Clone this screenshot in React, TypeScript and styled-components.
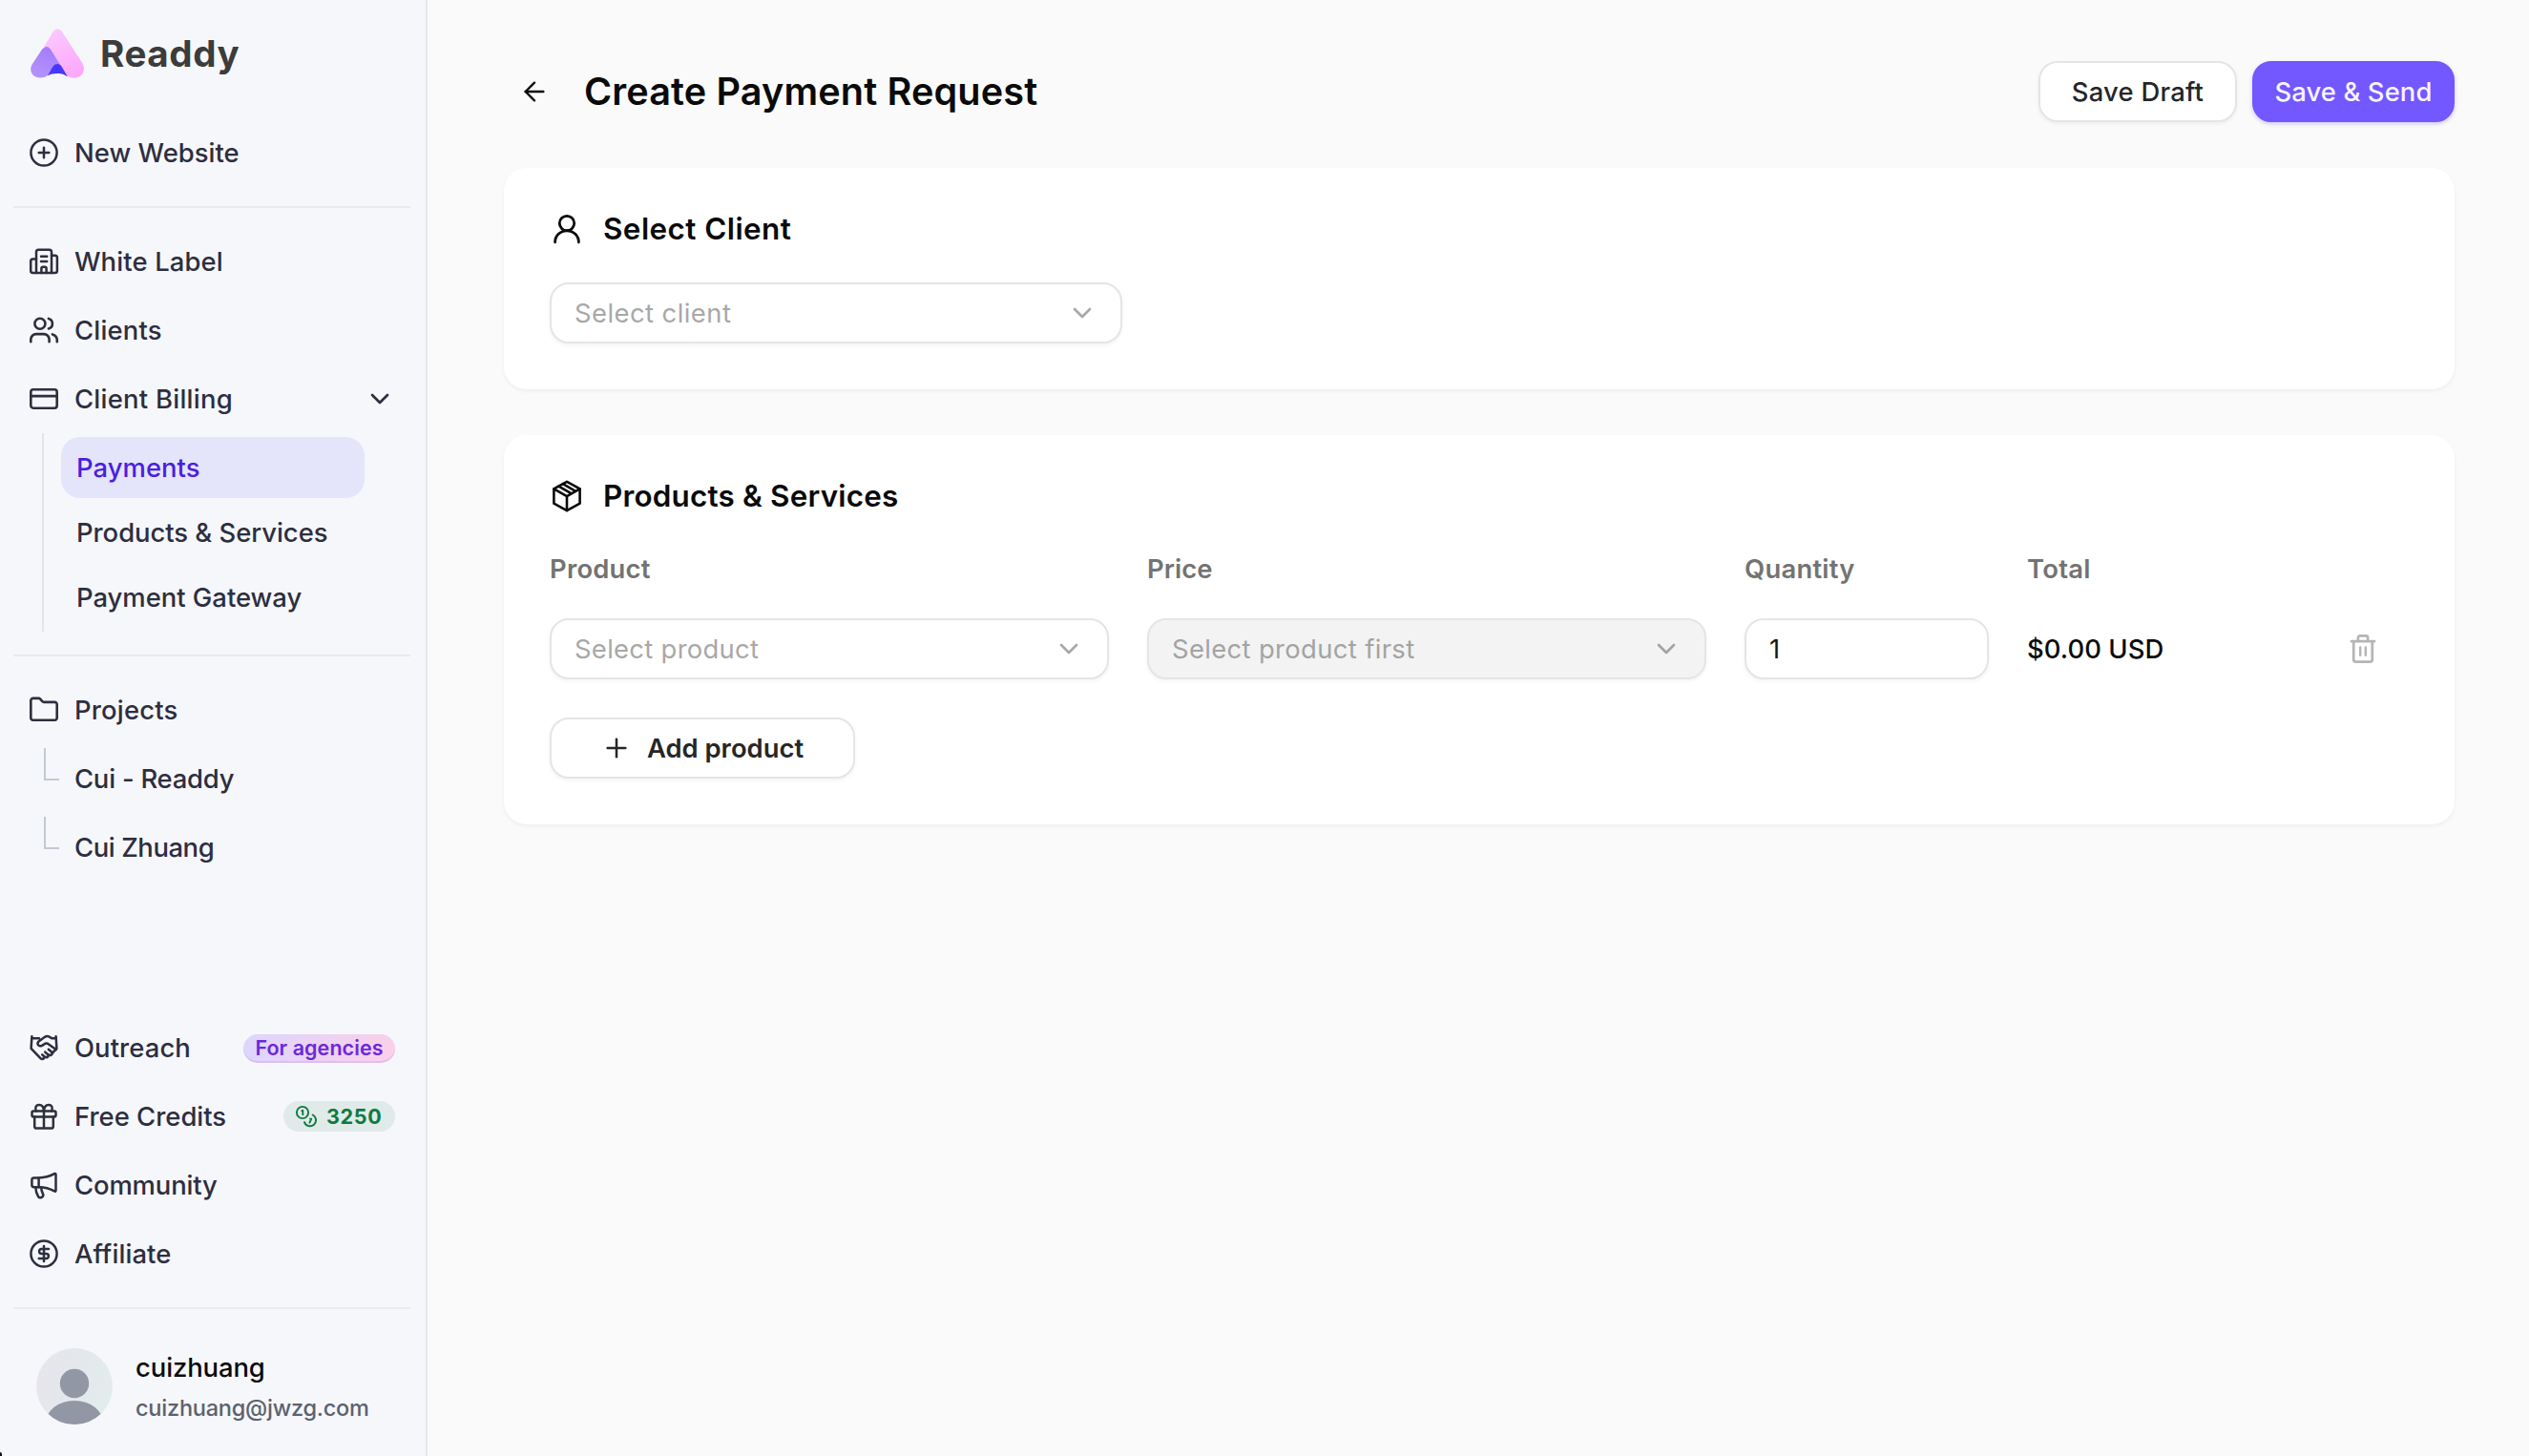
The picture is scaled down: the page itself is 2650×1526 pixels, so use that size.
import React from "react";
import styled, { createGlobalStyle, css } from "styled-components";
import { ArrowLeft, ChevronDown, Plus } from "lucide-react";

const GlobalStyle = createGlobalStyle`
  *, *::before, *::after { box-sizing: border-box; }
  body {
    margin: 0;
    background: #fafafa;
    font-family: Inter, "Noto Sans", sans-serif;
    font-size: 27.4px;
    -webkit-font-smoothing: antialiased;
  }
  svg { display: block; flex-shrink: 0; }
`;

const Page = styled.div`
  display: flex;
  height: 1526px;
  overflow: hidden;
`;

const Label = styled.span<{ $track?: number }>`
  letter-spacing: ${(p) => p.$track ?? 0}px;
  white-space: nowrap;
`;

/* ---------- Sidebar ---------- */

const Sidebar = styled.aside`
  position: relative;
  display: flex;
  flex-direction: column;
  flex: none;
  width: 448px;
  padding: 30px 16px 0 14px;
  background: #f6f7fb;
  border-right: 2px solid #e9eaee;
  color: #2d2e3e;
  font-weight: 500;
`;

const WindowCorner = styled.span`
  position: absolute;
  left: 0;
  bottom: 0;
  width: 2px;
  height: 4px;
  background: #111;
  border-top-right-radius: 2px;
`;

const Brand = styled.div`
  display: flex;
  align-items: center;
  gap: 17px;
  height: 52px;
  margin-bottom: 46px;
  padding-left: 18px;
  color: #3c3c3c;
  font-size: 38.5px;
  font-weight: 700;
  line-height: 52px;
`;

const Nav = styled.nav`
  display: flex;
  flex-direction: column;
  gap: 8px;
`;

const NavItem = styled.a`
  display: flex;
  align-items: center;
  gap: 16px;
  height: 64px;
  padding: 0 16px;
`;

const Trailing = styled.span`
  display: flex;
  margin-left: auto;
`;

const Divider = styled.hr`
  flex: none;
  width: 100%;
  height: 2px;
  margin: 24px 0;
  border: 0;
  background: #e9eaee;
`;

const SubNav = styled.div`
  display: flex;
  flex-direction: column;
  gap: 4px;
  margin: 4px 48px 0 30px;
  padding: 4px 0 4px 18px;
  border-left: 2px solid #e4e5e5;
`;

const SubItem = styled.a<{ $active?: boolean }>`
  display: flex;
  align-items: center;
  height: 64px;
  padding: 0 16px;
  border-radius: 20px;
  ${(p) =>
    p.$active &&
    css`
      background: #e4e4fb;
      color: #4a1ee0;
    `}
`;

const ProjectItem = styled.a`
  display: flex;
  height: 64px;
  padding-left: 32px;
  gap: 16px;
  line-height: 64px;
`;

const Branch = styled.span`
  width: 16px;
  height: 34px;
  border-left: 2px solid #c3c9d1;
  border-bottom: 2px solid #c3c9d1;
`;

const Spacer = styled.div`
  flex: 1;
`;

const AgencyPill = styled.span`
  display: flex;
  align-items: center;
  justify-content: center;
  width: 159px;
  height: 30px;
  margin-top: 2px;
  padding-bottom: 2px;
  border-radius: 15px;
  background: linear-gradient(100deg, #ddd6fe, #fbcfe8);
  box-shadow: inset 0 -2px 0 rgba(192, 132, 252, 0.28);
  color: #6d28d9;
  font-size: 21.5px;
  font-weight: 600;
`;

const CreditPill = styled.span`
  display: flex;
  align-items: center;
  gap: 9px;
  width: 117px;
  height: 32px;
  padding-left: 12px;
  border-radius: 16px;
  background: #e0ebe9;
  color: #0f7a42;
  font-size: 21.5px;
  font-weight: 700;
`;

const Account = styled.div`
  display: flex;
  align-items: center;
  gap: 24px;
  margin: 15px 0 31px;
  padding-left: 24px;
`;

const AccountText = styled.div`
  display: flex;
  flex-direction: column;
`;

const UserName = styled(Label)`
  color: #0a0a0a;
  line-height: 44px;
`;

const Email = styled(Label)`
  margin-bottom: -1px;
  color: #5b6270;
  font-size: 23.5px;
  line-height: 41px;
`;

/* ---------- Main ---------- */

const Main = styled.main`
  display: flex;
  flex: 1;
  flex-direction: column;
  padding: 64px 78px 0 80px;
  color: #0a0a0a;
`;

const Header = styled.header`
  display: flex;
  align-items: center;
  height: 64px;
  margin-bottom: 48px;
  padding-left: 16px;
`;

const Title = styled.h1`
  margin: 0 0 0 36px;
  font-size: 39.6px;
  font-weight: 600;
  letter-spacing: 0.15px;
`;

const Actions = styled.div`
  display: flex;
  gap: 16px;
  margin-left: auto;
`;

const Button = styled.button<{ $primary?: boolean; $width: number; $weight?: number }>`
  display: flex;
  align-items: center;
  justify-content: center;
  gap: 16px;
  width: ${(p) => p.$width}px;
  height: 64px;
  padding: 0;
  border: 2px solid ${(p) => (p.$primary ? "#7357ff" : "#e5e5e5")};
  border-radius: 20px;
  background: ${(p) => (p.$primary ? "#7357ff" : "#ffffff")};
  box-shadow: 0 2px 4px ${(p) => (p.$primary ? "rgba(115, 87, 255, 0.3)" : "rgba(0, 0, 0, 0.05)")};
  color: ${(p) => (p.$primary ? "#f7f5ff" : "#262626")};
  font: ${(p) => p.$weight ?? 500} 27.4px Inter, sans-serif;
`;

const Card = styled.section`
  display: flex;
  flex-direction: column;
  gap: 40px;
  margin-bottom: 48px;
  padding: 48px;
  border-radius: 24px;
  background: #ffffff;
  box-shadow: 0 2px 4px rgba(0, 0, 0, 0.05);
`;

const CardTitle = styled.h2<{ $track: number }>`
  display: flex;
  align-items: center;
  gap: 20px;
  height: 32px;
  margin: 0;
  font-size: 31.4px;
  font-weight: 600;
  letter-spacing: ${(p) => p.$track}px;
`;

const Field = styled.div<{ $width?: number; $disabled?: boolean; $filled?: boolean }>`
  display: flex;
  align-items: center;
  justify-content: space-between;
  width: ${(p) => (p.$width ? `${p.$width}px` : "100%")};
  height: 64px;
  padding: 0 24px;
  border: 2px solid #e5e5e5;
  border-radius: 20px;
  background: ${(p) => (p.$disabled ? "#f3f3f3" : "#ffffff")};
  box-shadow: 0 2px 4px rgba(0, 0, 0, 0.05);
  color: ${(p) => (p.$filled ? "#171717" : p.$disabled ? "#a3a3a3" : "#a8a8a8")};
`;

const Products = styled.div`
  display: grid;
  grid-template-columns: 586px 586px 256px 256px 96px;
  column-gap: 40px;
  row-gap: 32px;
  align-items: center;
`;

const ColumnHead = styled(Label)`
  height: 40px;
  color: #737373;
  font-weight: 600;
  line-height: 40px;
`;

const Amount = styled(Label)`
  font-weight: 500;
`;

const RemoveButton = styled.span`
  display: flex;
  justify-content: center;
  width: 112px;
  color: #b5b5b5;
`;

/* ---------- Icons ---------- */

const Glyph = ({ size = 32, stroke = 2.5, children }: { size?: number; stroke?: number; children: React.ReactNode }) => (
  <svg
    width={size}
    height={size}
    viewBox={`0 0 ${size} ${size}`}
    fill="none"
    stroke="currentColor"
    strokeWidth={stroke}
    strokeLinecap="round"
    strokeLinejoin="round"
  >
    {children}
  </svg>
);

const LogoMark = () => (
  <svg width="56" height="52" viewBox="0 0 56 52">
    <defs>
      <linearGradient id="pink" x1="0.3" y1="0" x2="0.8" y2="1">
        <stop offset="0" stopColor="#fbc8fd" />
        <stop offset="1" stopColor="#fca6fd" />
      </linearGradient>
      <linearGradient id="violet" x1="0.6" y1="0" x2="0.2" y2="1">
        <stop offset="0" stopColor="#a37bfd" />
        <stop offset="1" stopColor="#b593fc" />
      </linearGradient>
    </defs>
    <path
      d="M24 2.6Q28.3-2.2 32.6 2.6L54.2 36C58.6 43.4 54 51.5 46 51.5C42.5 51.5 40.5 50.8 38.7 50L20.5 20.5L13.8 19.5Z"
      fill="url(#pink)"
    />
    <path
      d="M12.2 21.6Q16.5 16.4 21 21.4L38.7 50L28 44L18 49C15.5 50.8 13 51.5 9.8 51.5C1.6 51.5-2.2 43.6 1.8 37.3Z"
      fill="url(#violet)"
    />
    <path
      d="M18 49.2C22 43.5 23 37 28.4 37C31 37 32.4 39.2 33.5 41.3L38.7 50.2C35 47.8 33 46.9 28.3 46.9C23.5 46.9 21 47.8 18 49.2Z"
      fill="#4838fb"
    />
  </svg>
);

const AddCircleIcon = () => (
  <Glyph stroke={2.5}>
    <circle cx="16" cy="16" r="13.6" />
    <path d="M16 10.7v10.6M10.7 16h10.6" />
  </Glyph>
);

const BuildingIcon = () => (
  <Glyph stroke={2.5}>
    <path d="M8 28V6a2.3 2.3 0 0 1 2.3-2.3h11.4A2.3 2.3 0 0 1 24 6v22" />
    <path d="M8 13.4H4.4A2.3 2.3 0 0 0 2.2 15.7v10A2.3 2.3 0 0 0 4.4 28h23.2a2.3 2.3 0 0 0 2.3-2.3V12a2.3 2.3 0 0 0-2.3-2.3H24" />
    <path d="M13 10.7h6.2M13 16h6.2M13.4 28v-4.6a1.6 1.6 0 0 1 1.6-1.6h2a1.6 1.6 0 0 1 1.6 1.6V28" />
  </Glyph>
);

const ClientsIcon = () => (
  <Glyph stroke={2.6}>
    <circle cx="11.9" cy="9.2" r="5.5" />
    <path d="M2.3 28.2v-2.4a5.7 5.7 0 0 1 5.7-5.7h7.9a5.7 5.7 0 0 1 5.7 5.7v2.4" />
    <path d="M20.9 3.9a5.5 5.5 0 0 1 0 10.6M24.9 20.4a6.4 6.4 0 0 1 4.9 6v1.8" />
  </Glyph>
);

const BillingIcon = () => (
  <Glyph stroke={2.6}>
    <rect x="2.3" y="6.3" width="27.4" height="19.4" rx="2.6" />
    <path d="M2.3 13.1h27.4" />
  </Glyph>
);

const FolderIcon = () => (
  <Glyph stroke={2.6}>
    <path d="M2.3 24.5V6.1A2.2 2.2 0 0 1 4.5 3.9h6.1a2.2 2.2 0 0 1 1.6.7l2.2 2.6a2.2 2.2 0 0 0 1.6.7h11.5a2.2 2.2 0 0 1 2.2 2.2v14.4a2.2 2.2 0 0 1-2.2 2.2H4.5a2.2 2.2 0 0 1-2.2-2.2Z" />
  </Glyph>
);

const HandshakeIcon = () => (
  <Glyph stroke={2.5}>
    <path d="M3.4 4.2L2.6 16.8L12.4 27.2Q14 28.8 15.6 27.4M28.6 4.2L29.4 16.8L25 21.6" />
    <path d="M3.2 6.3H11M28.8 6.3H24.6L21.6 4.6Q19.2 3.5 17 4.8L10.6 9.4Q8.6 11.4 10.2 13.4Q12 15 14.4 13.6L17.6 11.6Q19.4 11 21 12.4L28.8 18" />
    <path d="M20.8 17.8L24.2 20.8Q25.2 22.6 23.8 23.6Q22.4 24.4 20.8 23.2M17.2 20.6L20.2 23.2Q21 25 19.6 26Q18.2 26.6 16.8 25.4M14.2 23.4L16 25Q16.8 26.6 15.6 27.4" />
  </Glyph>
);

const GiftIcon = () => (
  <Glyph stroke={2.5}>
    <rect x="3.5" y="10.6" width="25" height="5.8" rx="1.6" />
    <path d="M6.2 16.6v9.8a2.2 2.2 0 0 0 2.2 2.2h15.2a2.2 2.2 0 0 0 2.2-2.2v-9.8M16 10.6v18" />
    <path d="M16 10.4C15.8 6.8 14.2 4 11 4C7.4 4 6.4 7.6 8 10.4M16 10.4C16.2 6.8 17.8 4 21 4C24.6 4 25.6 7.6 24 10.4" />
  </Glyph>
);

const MegaphoneIcon = () => (
  <Glyph stroke={2.5}>
    <path d="M10.6 8.4H5.6a2.2 2.2 0 0 0-2.2 2.2v5.4a2.2 2.2 0 0 0 2.2 2.2h5Z" />
    <path d="M10.6 8.4C16.4 8.4 22.4 6.8 27 4.2Q28.5 3.4 28.5 5V21.6Q28.5 23.2 27 22.4C22.4 19.8 16.4 18.2 10.6 18.2" />
    <path d="M7.4 18.4C7.4 22 8.4 25.4 10.2 28.2C11.6 30.2 15.2 29 15.4 26.6C15.4 25.2 13.2 23.4 13.2 18.6" />
  </Glyph>
);

const DollarIcon = () => (
  <Glyph stroke={2.5}>
    <circle cx="16" cy="16" r="13.6" />
    <path d="M16 8v16M21 11h-7.4a2.5 2.5 0 0 0 0 5h4.8a2.5 2.5 0 0 1 0 5H10.8" />
  </Glyph>
);

const CoinsIcon = () => (
  <Glyph size={24} stroke={1.9}>
    <circle cx="8" cy="8" r="6.1" />
    <path d="M7.3 6.2L8.3 5.8V10.2" />
    <path d="M18.6 10.5a6.2 6.2 0 1 1-8.6 7.6M16 14.6l1.2.2l-1.8 3.8" />
  </Glyph>
);

const PersonIcon = () => (
  <Glyph size={36} stroke={2.8}>
    <circle cx="18" cy="12" r="7.7" />
    <path d="M5.6 31.8C5.6 25 11 19.8 18 19.8S30.4 25 30.4 31.8" />
  </Glyph>
);

const BoxIcon = () => (
  <Glyph size={36} stroke={2.6}>
    <path d="M18 2.8L31.6 10.3V25.7L18 33.2L4.4 25.7V10.3Z" />
    <path d="M4.4 10.3L18 18.2L31.6 10.3M18 18.2V33M9.4 7.6L22.9 15.3M13.8 5.2L27.2 12.8" />
  </Glyph>
);

const TrashIcon = () => (
  <Glyph size={32} stroke={2.7}>
    <path d="M4 8.2h24M10.9 8V4.3a2 2 0 0 1 2-2h6.2a2 2 0 0 1 2 2V8" />
    <path d="M6.2 8.4V27.2a2.4 2.4 0 0 0 2.4 2.4h14.8a2.4 2.4 0 0 0 2.4-2.4V8.4" />
    <path d="M13.2 14.4v8.4M18.8 14.4v8.4" strokeWidth={2.4} />
  </Glyph>
);

const Avatar = () => (
  <svg width="80" height="80" viewBox="0 0 80 80">
    <defs>
      <linearGradient id="avatarTint" x1="0" y1="0.3" x2="1" y2="0.7">
        <stop offset="0" stopColor="#e7e5eb" />
        <stop offset="0.5" stopColor="#e3e8ec" />
        <stop offset="1" stopColor="#e3edec" />
      </linearGradient>
      <clipPath id="avatarClip">
        <circle cx="40" cy="40" r="40" />
      </clipPath>
    </defs>
    <g clipPath="url(#avatarClip)">
      <rect width="80" height="80" fill="url(#avatarTint)" />
      <circle cx="40" cy="37" r="15.2" fill="#9197a4" />
      <ellipse cx="40" cy="78" rx="30" ry="23" fill="#9197a4" />
    </g>
  </svg>
);

export default function App() {
  return (
    <Page>
      <GlobalStyle />
      <Sidebar>
        <Brand>
          <LogoMark />
          <Label $track={0.6}>Readdy</Label>
        </Brand>
        <Nav>
          <NavItem>
            <AddCircleIcon />
            <Label $track={0.04}>New Website</Label>
          </NavItem>
        </Nav>
        <Divider />
        <Nav>
          <NavItem>
            <BuildingIcon />
            <Label $track={0.15}>White Label</Label>
          </NavItem>
          <NavItem>
            <ClientsIcon />
            <Label $track={0.2}>Clients</Label>
          </NavItem>
          <NavItem>
            <BillingIcon />
            <Label $track={0.27}>Client Billing</Label>
            <Trailing>
              <ChevronDown size={32} />
            </Trailing>
          </NavItem>
        </Nav>
        <SubNav>
          <SubItem $active>
            <Label $track={0.06}>Payments</Label>
          </SubItem>
          <SubItem>
            <Label $track={-0.02}>Products &amp; Services</Label>
          </SubItem>
          <SubItem>
            <Label>Payment Gateway</Label>
          </SubItem>
        </SubNav>
        <Divider />
        <Nav>
          <NavItem>
            <FolderIcon />
            <Label $track={0.2}>Projects</Label>
          </NavItem>
          <ProjectItem>
            <Branch />
            <Label $track={-0.22}>Cui - Readdy</Label>
          </ProjectItem>
          <ProjectItem>
            <Branch />
            <Label $track={-0.4}>Cui Zhuang</Label>
          </ProjectItem>
        </Nav>
        <Spacer />
        <Nav>
          <NavItem>
            <HandshakeIcon />
            <Label $track={0.1}>Outreach</Label>
            <Trailing>
              <AgencyPill>
                <Label $track={0.07}>For agencies</Label>
              </AgencyPill>
            </Trailing>
          </NavItem>
          <NavItem>
            <GiftIcon />
            <Label $track={0.02}>Free Credits</Label>
            <Trailing>
              <CreditPill>
                <CoinsIcon />
                <Label $track={0.7}>3250</Label>
              </CreditPill>
            </Trailing>
          </NavItem>
          <NavItem>
            <MegaphoneIcon />
            <Label $track={-0.12}>Community</Label>
          </NavItem>
          <NavItem>
            <DollarIcon />
            <Label $track={0.1}>Affiliate</Label>
          </NavItem>
        </Nav>
        <Divider />
        <Account>
          <Avatar />
          <AccountText>
            <UserName $track={-0.08}>cuizhuang</UserName>
            <Email $track={-0.22}>cuizhuang@jwzg.com</Email>
          </AccountText>
        </Account>
        <WindowCorner />
      </Sidebar>

      <Main>
        <Header>
          <ArrowLeft size={32} strokeWidth={1.8} />
          <Title>Create Payment Request</Title>
          <Actions>
            <Button $width={208}>
              <Label $track={0.24}>Save Draft</Label>
            </Button>
            <Button $primary $width={212}>
              <Label $track={0.1}>Save &amp; Send</Label>
            </Button>
          </Actions>
        </Header>

        <Card>
          <CardTitle $track={0.45}>
            <PersonIcon />
            Select Client
          </CardTitle>
          <Field $width={600}>
            <Label $track={0.45}>Select client</Label>
            <ChevronDown size={32} />
          </Field>
        </Card>

        <Card>
          <CardTitle $track={0.2}>
            <BoxIcon />
            Products &amp; Services
          </CardTitle>
          <Products>
            <ColumnHead $track={0.22}>Product</ColumnHead>
            <ColumnHead $track={0.1}>Price</ColumnHead>
            <ColumnHead $track={0.25}>Quantity</ColumnHead>
            <ColumnHead $track={0.3}>Total</ColumnHead>
            <span />
            <Field>
              <Label $track={0.3}>Select product</Label>
              <ChevronDown size={32} />
            </Field>
            <Field $disabled>
              <Label $track={0.36}>Select product first</Label>
              <ChevronDown size={32} />
            </Field>
            <Field $filled>
              <Label>1</Label>
            </Field>
            <Amount $track={0.08}>$0.00 USD</Amount>
            <RemoveButton>
              <TrashIcon />
            </RemoveButton>
          </Products>
          <Button $width={320} $weight={600}>
            <Plus size={32} strokeWidth={1.9} />
            <Label>Add product</Label>
          </Button>
        </Card>
      </Main>
    </Page>
  );
}
